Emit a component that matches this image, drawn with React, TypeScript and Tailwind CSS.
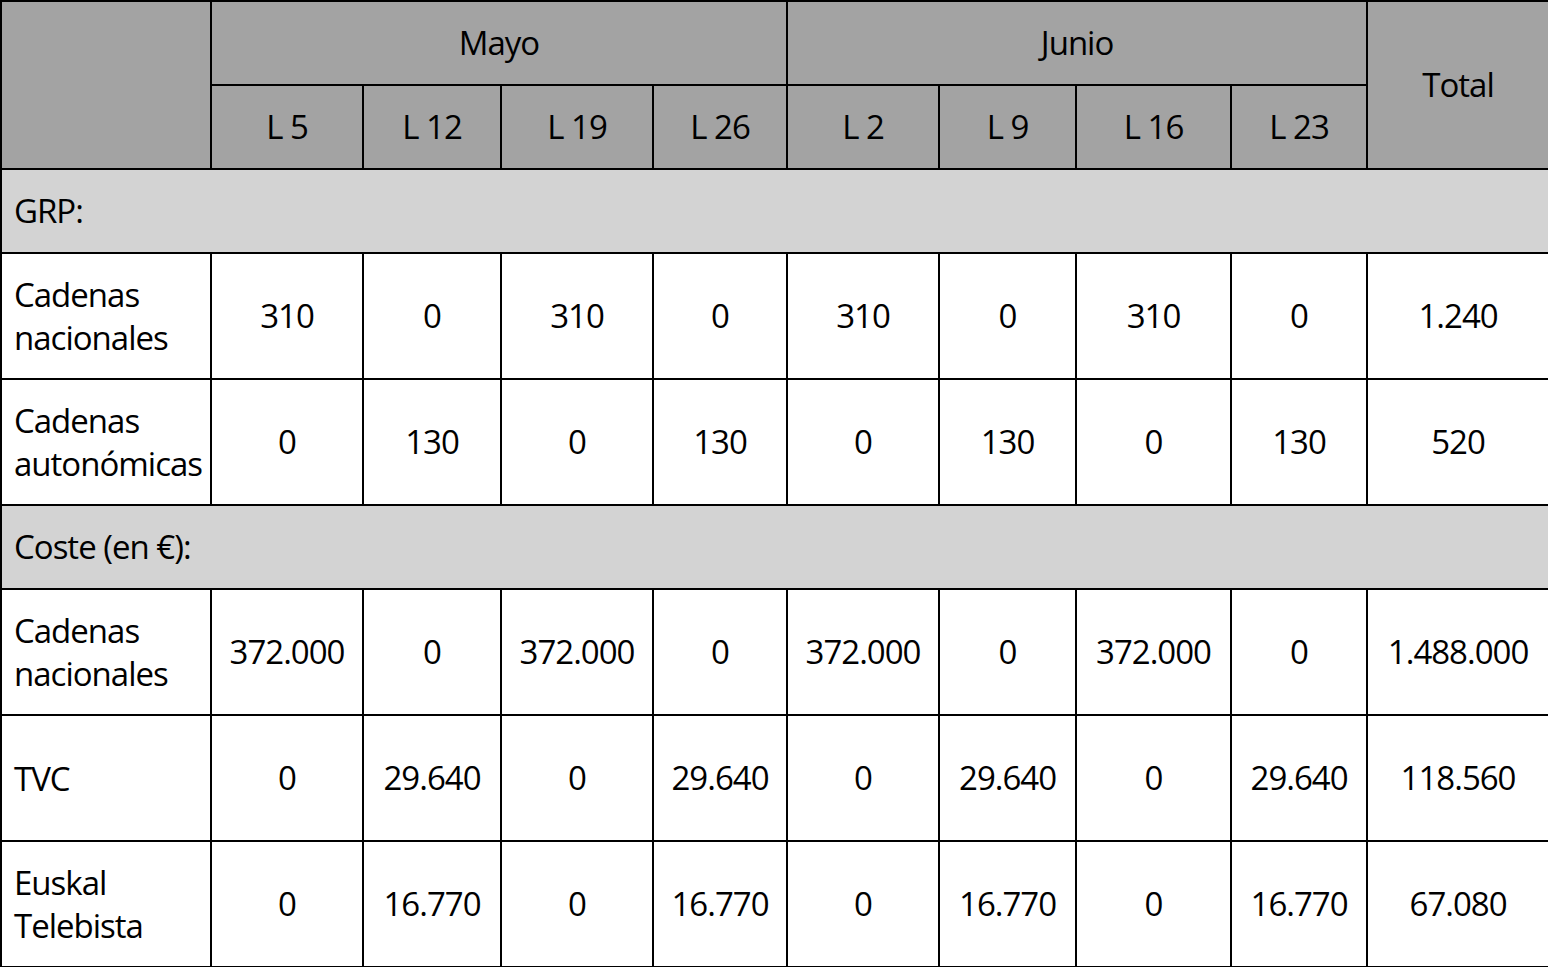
const weeks = ["L 5", "L 12", "L 19", "L 26", "L 2", "L 9", "L 16", "L 23"];
const colWidths = [210, 152, 138, 152, 134, 152, 137, 155, 136, 182];

type Row = { label: string[]; values: string[]; total: string };

const grp: Row[] = [
  { label: ["Cadenas", "nacionales"], values: ["310", "0", "310", "0", "310", "0", "310", "0"], total: "1.240" },
  { label: ["Cadenas", "autonómicas"], values: ["0", "130", "0", "130", "0", "130", "0", "130"], total: "520" },
];

const coste: Row[] = [
  {
    label: ["Cadenas", "nacionales"],
    values: ["372.000", "0", "372.000", "0", "372.000", "0", "372.000", "0"],
    total: "1.488.000",
  },
  { label: ["TVC"], values: ["0", "29.640", "0", "29.640", "0", "29.640", "0", "29.640"], total: "118.560" },
  {
    label: ["Euskal", "Telebista"],
    values: ["0", "16.770", "0", "16.770", "0", "16.770", "0", "16.770"],
    total: "67.080",
  },
];

const cell = "border-2 border-black";

function DataRow({ row }: { row: Row }) {
  return (
    <tr className="h-[126px] bg-white">
      <td className={`${cell} pl-[12px] pr-0 text-left leading-[43px] whitespace-nowrap`}>
        {row.label.map((l) => (
          <div key={l}>{l}</div>
        ))}
      </td>
      {row.values.map((v, i) => (
        <td key={i} className={`${cell} text-center whitespace-nowrap`}>
          {v}
        </td>
      ))}
      <td className={`${cell} text-center whitespace-nowrap`}>{row.total}</td>
    </tr>
  );
}

function SectionRow({ label }: { label: string }) {
  return (
    <tr className="h-[84px] bg-[#d3d3d3]">
      <td colSpan={10} className={`${cell} pl-[12px] text-left`}>
        {label}
      </td>
    </tr>
  );
}

export default function App() {
  return (
    <div className="h-[967px] w-[1548px] overflow-hidden bg-white text-black">
      <table
        className="w-[1548px] table-fixed border-collapse text-[33px] tracking-[-1px]"
        style={{ fontFamily: '"Open Sans", "Noto Sans", sans-serif' }}
      >
        <colgroup>
          {colWidths.map((w, i) => (
            <col key={i} style={{ width: w }} />
          ))}
        </colgroup>
        <thead>
          <tr className="h-[84px] bg-[#a3a3a3]">
            <th rowSpan={2} className={`${cell} font-normal`} />
            <th colSpan={4} className={`${cell} font-normal`}>
              Mayo
            </th>
            <th colSpan={4} className={`${cell} font-normal`}>
              Junio
            </th>
            <th rowSpan={2} className={`${cell} font-normal`}>
              Total
            </th>
          </tr>
          <tr className="h-[84px] bg-[#a3a3a3]">
            {weeks.map((w) => (
              <th key={w} className={`${cell} font-normal whitespace-nowrap`}>
                {w}
              </th>
            ))}
          </tr>
        </thead>
        <tbody>
          <SectionRow label="GRP:" />
          {grp.map((r, i) => (
            <DataRow key={i} row={r} />
          ))}
          <SectionRow label="Coste (en €):" />
          {coste.map((r, i) => (
            <DataRow key={i} row={r} />
          ))}
        </tbody>
      </table>
    </div>
  );
}
